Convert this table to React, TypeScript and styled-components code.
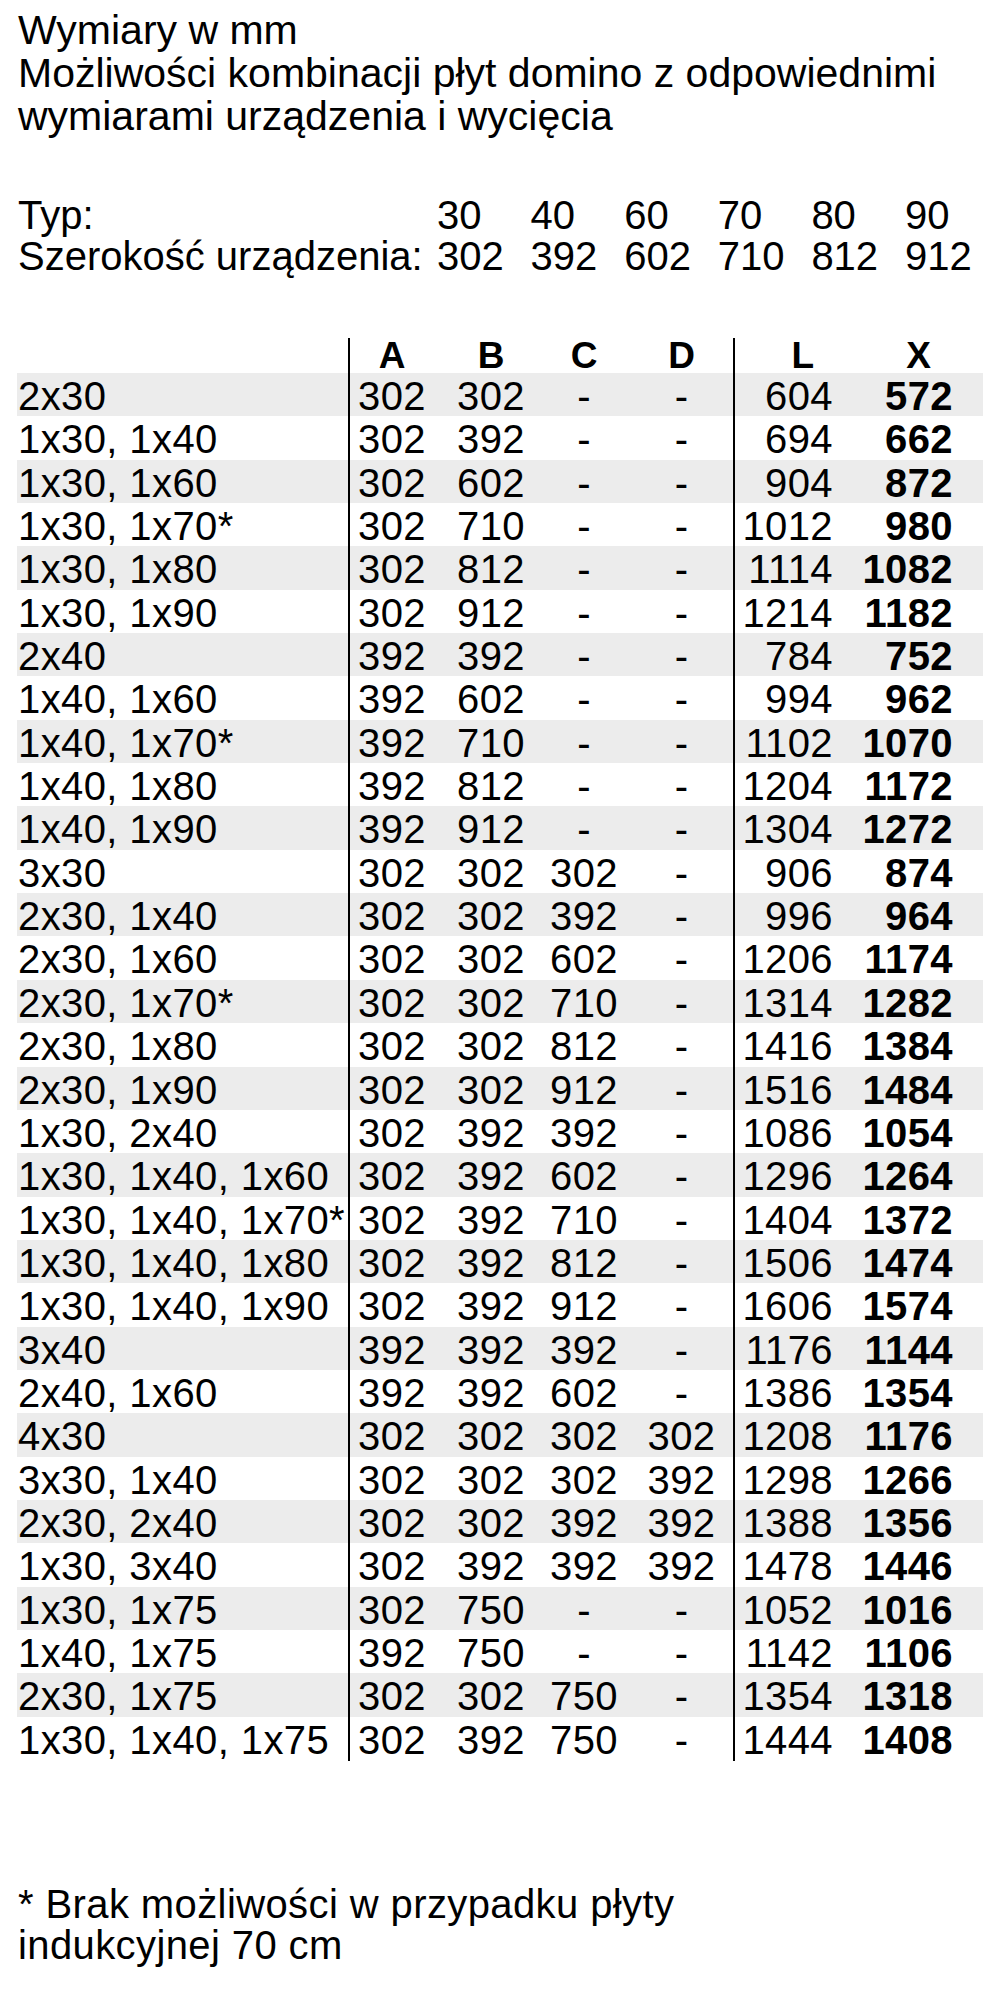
import styled, { createGlobalStyle } from 'styled-components';

const GlobalStyle = createGlobalStyle`
  body {
    margin: 0;
    background: #fff;
    color: #000;
    font-family: "Liberation Sans", Arial, sans-serif;
  }
`;

const TYPES = [
  { typ: '30', width: '302' },
  { typ: '40', width: '392' },
  { typ: '60', width: '602' },
  { typ: '70', width: '710' },
  { typ: '80', width: '812' },
  { typ: '90', width: '912' },
];

// label, A, B, C, D, L, X
const ROWS: string[][] = [
  ['2x30', '302', '302', '-', '-', '604', '572'],
  ['1x30, 1x40', '302', '392', '-', '-', '694', '662'],
  ['1x30, 1x60', '302', '602', '-', '-', '904', '872'],
  ['1x30, 1x70*', '302', '710', '-', '-', '1012', '980'],
  ['1x30, 1x80', '302', '812', '-', '-', '1114', '1082'],
  ['1x30, 1x90', '302', '912', '-', '-', '1214', '1182'],
  ['2x40', '392', '392', '-', '-', '784', '752'],
  ['1x40, 1x60', '392', '602', '-', '-', '994', '962'],
  ['1x40, 1x70*', '392', '710', '-', '-', '1102', '1070'],
  ['1x40, 1x80', '392', '812', '-', '-', '1204', '1172'],
  ['1x40, 1x90', '392', '912', '-', '-', '1304', '1272'],
  ['3x30', '302', '302', '302', '-', '906', '874'],
  ['2x30, 1x40', '302', '302', '392', '-', '996', '964'],
  ['2x30, 1x60', '302', '302', '602', '-', '1206', '1174'],
  ['2x30, 1x70*', '302', '302', '710', '-', '1314', '1282'],
  ['2x30, 1x80', '302', '302', '812', '-', '1416', '1384'],
  ['2x30, 1x90', '302', '302', '912', '-', '1516', '1484'],
  ['1x30, 2x40', '302', '392', '392', '-', '1086', '1054'],
  ['1x30, 1x40, 1x60', '302', '392', '602', '-', '1296', '1264'],
  ['1x30, 1x40, 1x70*', '302', '392', '710', '-', '1404', '1372'],
  ['1x30, 1x40, 1x80', '302', '392', '812', '-', '1506', '1474'],
  ['1x30, 1x40, 1x90', '302', '392', '912', '-', '1606', '1574'],
  ['3x40', '392', '392', '392', '-', '1176', '1144'],
  ['2x40, 1x60', '392', '392', '602', '-', '1386', '1354'],
  ['4x30', '302', '302', '302', '302', '1208', '1176'],
  ['3x30, 1x40', '302', '302', '302', '392', '1298', '1266'],
  ['2x30, 2x40', '302', '302', '392', '392', '1388', '1356'],
  ['1x30, 3x40', '302', '392', '392', '392', '1478', '1446'],
  ['1x30, 1x75', '302', '750', '-', '-', '1052', '1016'],
  ['1x40, 1x75', '392', '750', '-', '-', '1142', '1106'],
  ['2x30, 1x75', '302', '302', '750', '-', '1354', '1318'],
  ['1x30, 1x40, 1x75', '302', '392', '750', '-', '1444', '1408'],
];

export default function App() {
  return (
    <Page>
      <GlobalStyle />
      <Heading>
        <div>Wymiary w mm</div>
        <div>Możliwości kombinacji płyt domino z odpowiednimi</div>
        <div>wymiarami urządzenia i wycięcia</div>
      </Heading>

      <TypeGrid>
        <span>Typ:</span>
        {TYPES.map((t) => (
          <span key={t.typ}>{t.typ}</span>
        ))}
        <span>Szerokość urządzenia:</span>
        {TYPES.map((t) => (
          <span key={t.width}>{t.width}</span>
        ))}
      </TypeGrid>

      <Table>
        <HeadRow>
          <HeadCell />
          <HeadCell $line>A</HeadCell>
          <HeadCell>B</HeadCell>
          <HeadCell>C</HeadCell>
          <HeadCell $padLeft={10}>D</HeadCell>
          <HeadCell $line $align="right" $padRight={39}>
            L
          </HeadCell>
          <HeadCell $align="right" $padRight={52}>
            X
          </HeadCell>
        </HeadRow>
        {ROWS.map((row, i) => (
          <Row key={row[0]} $shaded={i % 2 === 0}>
            <Label>{row[0]}</Label>
            <Cell $line>{row[1]}</Cell>
            <Cell>{row[2]}</Cell>
            <Cell>{row[3]}</Cell>
            <Cell $padLeft={10}>{row[4]}</Cell>
            <Cell $line $align="right" $padRight={20}>
              {row[5]}
            </Cell>
            <Cell $align="right" $padRight={30} $bold>
              {row[6]}
            </Cell>
          </Row>
        ))}
      </Table>

      <Footnote>
        <div>* Brak możliwości w przypadku płyty</div>
        <div>indukcyjnej 70 cm</div>
      </Footnote>
    </Page>
  );
}

const Page = styled.div`
  padding: 9px 17px 40px 17px;
  width: 1000px;
  box-sizing: border-box;
`;

const Heading = styled.div`
  font-size: 41px;
  line-height: 43px;
  padding-left: 1px;
`;

const TypeGrid = styled.div`
  display: grid;
  grid-template-columns: 420px repeat(6, 93.6px);
  margin-top: 57px;
  font-size: 40px;
  line-height: 41px;
  white-space: nowrap;

  span:first-child,
  span:nth-child(8) {
    padding-left: 1px;
  }
`;

const Table = styled.div`
  margin-top: 61px;
  width: 966px;
`;

const COLUMNS = '331px 86px 114px 72px 113px 120px 130px';

const HeadRow = styled.div`
  display: grid;
  grid-template-columns: ${COLUMNS};
  height: 35px;
`;

const HeadCell = styled.div<{
  $line?: boolean;
  $align?: 'center' | 'right';
  $padLeft?: number;
  $padRight?: number;
}>`
  border-left: ${(p) => (p.$line ? '2px solid #000' : 'none')};
  text-align: ${(p) => p.$align ?? 'center'};
  padding-left: ${(p) => p.$padLeft ?? 0}px;
  padding-right: ${(p) => p.$padRight ?? 0}px;
  font-size: 37px;
  font-weight: bold;
  line-height: 35px;
  box-sizing: border-box;
`;

const Row = styled.div<{ $shaded: boolean }>`
  display: grid;
  grid-template-columns: ${COLUMNS};
  height: 43.35px;
  background: ${(p) => (p.$shaded ? '#ececec' : 'transparent')};
  font-size: 40px;
  letter-spacing: 0.4px;
  white-space: nowrap;
`;

const Label = styled.div`
  padding: 2px 0 0 1px;
  line-height: 42px;
`;

const Cell = styled.div<{
  $line?: boolean;
  $align?: 'center' | 'right';
  $padLeft?: number;
  $padRight?: number;
  $bold?: boolean;
}>`
  border-left: ${(p) => (p.$line ? '2px solid #000' : 'none')};
  text-align: ${(p) => p.$align ?? 'center'};
  padding-top: 2px;
  padding-left: ${(p) => p.$padLeft ?? 0}px;
  padding-right: ${(p) => p.$padRight ?? 0}px;
  line-height: 42px;
  font-weight: ${(p) => (p.$bold ? 'bold' : 'normal')};
  box-sizing: border-box;
`;

const Footnote = styled.div`
  margin-top: 124px;
  font-size: 40px;
  letter-spacing: 0.4px;
  line-height: 41px;
  padding-left: 1px;
`;
